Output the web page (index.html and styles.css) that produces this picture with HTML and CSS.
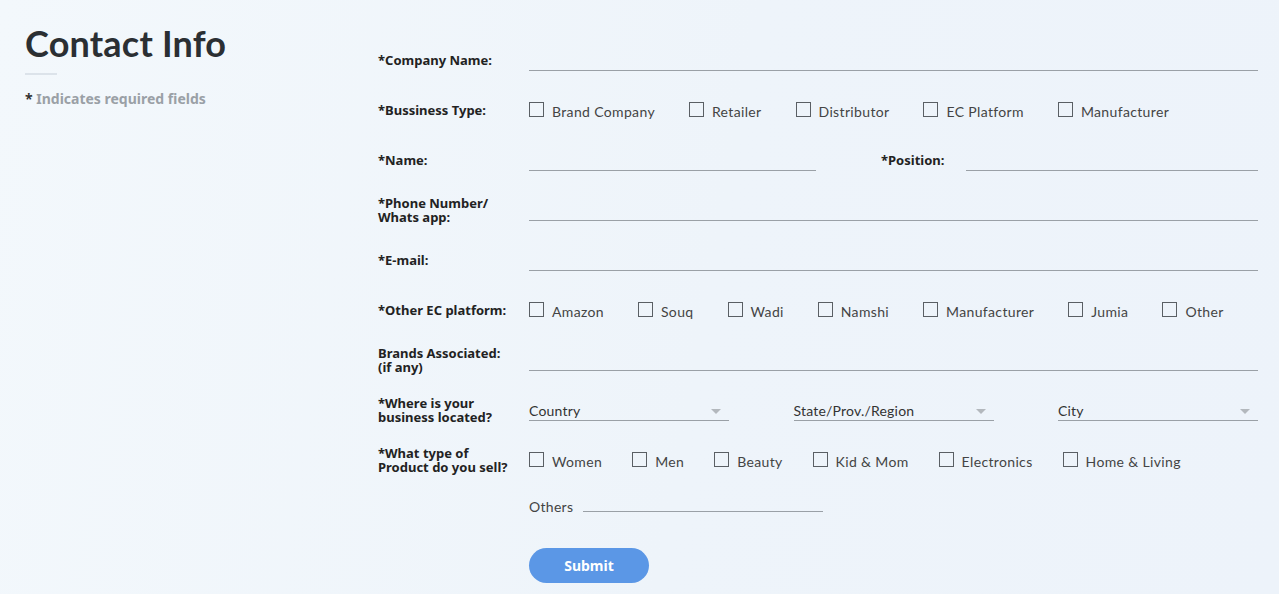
FILE: index.html
```html
<!DOCTYPE html>
<html>
<head>
<meta charset="utf-8">
<link rel="stylesheet" href="styles.css">
</head>
<body>
<div class="page">
  <aside class="side">
    <h1 class="title">Contact Info</h1>
    <div class="divider"></div>
    <p class="note"><span class="star">*</span> Indicates required fields</p>
  </aside>
  <form class="form">
    <div class="row">
      <div class="label">*Company Name:</div>
      <div class="field"><input class="line full" type="text"></div>
    </div>
    <div class="row">
      <div class="label">*Bussiness Type:</div>
      <div class="field opts">
        <label class="opt"><input type="checkbox" class="cb">Brand Company</label>
        <label class="opt"><input type="checkbox" class="cb">Retailer</label>
        <label class="opt"><input type="checkbox" class="cb">Distributor</label>
        <label class="opt"><input type="checkbox" class="cb">EC Platform</label>
        <label class="opt"><input type="checkbox" class="cb">Manufacturer</label>
      </div>
    </div>
    <div class="row">
      <div class="label">*Name:</div>
      <div class="field split">
        <input class="line name" type="text">
        <div class="label pos-label">*Position:</div>
        <input class="line pos" type="text">
      </div>
    </div>
    <div class="row">
      <div class="label"><span class="ln">*Phone Number/</span><span class="ln">Whats app:</span></div>
      <div class="field"><input class="line full" type="text"></div>
    </div>
    <div class="row">
      <div class="label">*E-mail:</div>
      <div class="field"><input class="line full" type="text"></div>
    </div>
    <div class="row">
      <div class="label">*Other EC platform:</div>
      <div class="field opts">
        <label class="opt"><input type="checkbox" class="cb">Amazon</label>
        <label class="opt"><input type="checkbox" class="cb">Souq</label>
        <label class="opt"><input type="checkbox" class="cb">Wadi</label>
        <label class="opt"><input type="checkbox" class="cb">Namshi</label>
        <label class="opt"><input type="checkbox" class="cb">Manufacturer</label>
        <label class="opt"><input type="checkbox" class="cb">Jumia</label>
        <label class="opt"><input type="checkbox" class="cb">Other</label>
      </div>
    </div>
    <div class="row">
      <div class="label"><span class="ln">Brands Associated:</span><span class="ln">(if any)</span></div>
      <div class="field"><input class="line full" type="text"></div>
    </div>
    <div class="row">
      <div class="label"><span class="ln">*Where is your</span><span class="ln">business located?</span></div>
      <div class="field selects">
        <div class="select"><span>Country</span><span class="arrow"></span></div>
        <div class="select"><span>State/Prov./Region</span><span class="arrow"></span></div>
        <div class="select"><span>City</span><span class="arrow"></span></div>
      </div>
    </div>
    <div class="row">
      <div class="label"><span class="ln">*What type of</span><span class="ln">Product do you sell?</span></div>
      <div class="field opts tight">
        <label class="opt"><input type="checkbox" class="cb">Women</label>
        <label class="opt"><input type="checkbox" class="cb">Men</label>
        <label class="opt"><input type="checkbox" class="cb">Beauty</label>
        <label class="opt"><input type="checkbox" class="cb">Kid &amp; Mom</label>
        <label class="opt"><input type="checkbox" class="cb">Electronics</label>
        <label class="opt"><input type="checkbox" class="cb">Home &amp; Living</label>
      </div>
    </div>
    <div class="row others-row">
      <div class="label"></div>
      <div class="field others">
        <span class="others-text">Others</span>
        <input class="line others-line" type="text">
      </div>
    </div>
    <div class="row submit-row">
      <div class="label"></div>
      <div class="field"><button type="button" class="submit">Submit</button></div>
    </div>
  </form>
</div>
</body>
</html>
```

FILE: styles.css
```css
* { box-sizing: border-box; }
html, body { margin: 0; padding: 0; }
body {
  width: 1279px;
  height: 594px;
  overflow: hidden;
  font-family: Lato, "Noto Sans", "Liberation Sans", sans-serif;
  background: linear-gradient(100deg, #f3f8fc 0%, #eef4fa 55%, #edf3fa 100%);
  color: #222;
}
.page {
  display: flex;
}
.side {
  flex: none;
  width: 378px;
  padding: 21px 0 0 25px;
}
.title {
  margin: 0;
  font-size: 36px;
  font-weight: 700;
  color: #2b2f33;
  line-height: 44px;
  letter-spacing: 0.2px;
}
.divider {
  width: 32px;
  height: 2px;
  background: #dce3ea;
  margin-top: 8px;
}
.note {
  margin: 14px 0 0;
  font-family: "Noto Sans", Lato, sans-serif;
  font-size: 14px;
  font-weight: 700;
  color: #9aa0a6;
}
.note .star { color: #333; }
.form {
  flex: 1;
  min-width: 0;
  padding-top: 35px;
  padding-right: 21px;
}
.row {
  display: flex;
  align-items: center;
  height: 50px;
}
.label {
  width: 151px;
  flex: none;
  font-family: "Noto Sans", Lato, sans-serif;
  font-size: 13px;
  font-weight: 700;
  line-height: 15px;
  color: #222;
}
.ln {
  display: block;
  line-height: 14px;
  height: 14px;
}
.field {
  flex: 1;
  display: flex;
  align-items: center;
}
.line {
  border: none;
  border-bottom: 1px solid #9aa0a6;
  background: transparent;
  height: 21px;
  outline: none;
  padding: 0;
  margin: 0;
  margin-top: 1px;
  font: inherit;
}
.full { width: 100%; }
.split .name { width: 287px; }
.split .pos-label { width: 85px; margin-left: 65px; }
.split .pos { flex: 1; }
.opt {
  display: flex;
  align-items: center;
  font-size: 14px;
  letter-spacing: 0.35px;
  color: #444;
  margin-right: 34px;
  padding-top: 2px;
}
.tight .opt { margin-right: 30px; }
.cb {
  appearance: none;
  -webkit-appearance: none;
  width: 15px;
  height: 15px;
  margin: -4px 8px 0 0;
  border: 1px solid #5a5f64;
  background: transparent;
  border-radius: 0;
}
.selects { justify-content: space-between; }
.select {
  width: 200px;
  height: 21px;
  margin-top: 1px;
  border-bottom: 1px solid #9aa0a6;
  display: flex;
  align-items: center;
  justify-content: space-between;
  font-size: 14px;
  letter-spacing: 0.2px;
  color: #333;
  padding-right: 8px;
}
.arrow {
  width: 0;
  height: 0;
  border-left: 5px solid transparent;
  border-right: 5px solid transparent;
  border-top: 5px solid #b3b8bd;
  margin-top: 2px;
}
.others-row { height: 42px; }
.others-text { font-size: 14px; letter-spacing: 0.3px; color: #444; margin-right: 10px; }
.others-line { width: 240px; height: 10px; margin-top: 0; align-self: center; position: relative; top: 1px; }
.submit-row { height: auto; margin-top: 21px; }
.submit {
  width: 120px;
  height: 35px;
  border: none;
  border-radius: 18px;
  background: #5b97e6;
  color: #fff;
  font-family: "Noto Sans", Lato, sans-serif;
  font-weight: 700;
  font-size: 14px;
}
```
